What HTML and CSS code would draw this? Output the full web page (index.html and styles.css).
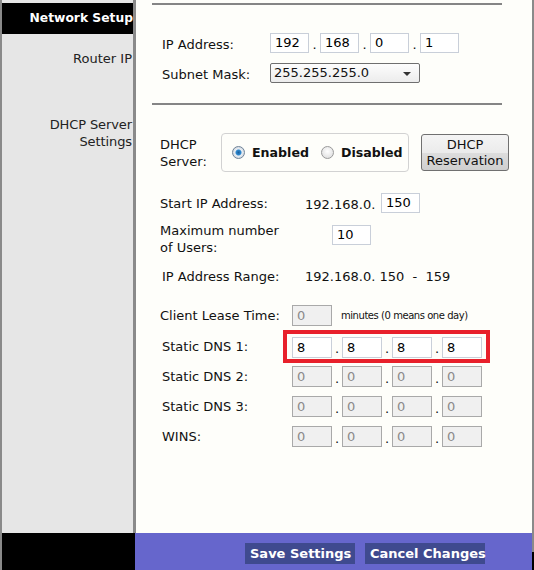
FILE: index.html
```html
<!DOCTYPE html>
<html>
<head>
<meta charset="utf-8">
<link rel="stylesheet" href="styles.css">
</head>
<body>
<div class="page">
  <div class="top">
    <div class="sidebar">
      <div class="side-head">Network Setup</div>
      <div class="side-item side-router">Router IP</div>
      <div class="side-item side-dhcp">DHCP Server<br>Settings</div>
    </div>
    <div class="main">
      <div class="hr hr1"></div>
      <div class="row row-ip">
        <span class="lbl lbl-ip">IP Address:</span>
        <div class="quad">
          <span class="inp">192</span><span class="dot">.</span>
          <span class="inp">168</span><span class="dot">.</span>
          <span class="inp">0</span><span class="dot">.</span>
          <span class="inp">1</span>
        </div>
      </div>
      <div class="row row-mask">
        <span class="lbl lbl-ip">Subnet Mask:</span>
        <div class="select"><span>255.255.255.0</span><span class="arrow"></span></div>
      </div>
      <div class="hr hr2"></div>
      <div class="row row-dhcp">
        <span class="lbl lbl-dhcp">DHCP<br>Server:</span>
        <div class="radios">
          <span class="radio on"></span><b class="rlabel">Enabled</b>
          <span class="radio"></span><b class="rlabel">Disabled</b>
        </div>
        <div class="btn-res">DHCP<br>Reservation</div>
      </div>
      <div class="row row-start">
        <span class="lbl lbl-start">Start IP Address:</span>
        <span class="val">192.168.0.</span>
        <span class="inp inp-start">150</span>
      </div>
      <div class="row row-max">
        <span class="lbl lbl-max">Maximum number<br>of Users:</span>
        <span class="inp inp-max">10</span>
      </div>
      <div class="row row-range">
        <span class="lbl lbl-range">IP Address Range:</span>
        <span class="val">192.168.0. 150&nbsp; - &nbsp;159</span>
      </div>
      <div class="row row-lease">
        <span class="lbl lbl-lease">Client Lease Time:</span>
        <span class="inp dis">0</span>
        <span class="note">minutes (0 means one day)</span>
      </div>
      <div class="row row-dns1">
        <span class="lbl lbl-dns1">Static DNS 1:</span>
        <div class="redbox">
          <div class="quad">
            <span class="inp">8</span><span class="dot">.</span>
            <span class="inp">8</span><span class="dot">.</span>
            <span class="inp">8</span><span class="dot">.</span>
            <span class="inp">8</span>
          </div>
        </div>
      </div>
      <div class="row row-dns2">
        <span class="lbl lbl-dns">Static DNS 2:</span>
        <div class="quad">
          <span class="inp dis">0</span><span class="dot">.</span>
          <span class="inp dis">0</span><span class="dot">.</span>
          <span class="inp dis">0</span><span class="dot">.</span>
          <span class="inp dis">0</span>
        </div>
      </div>
      <div class="row row-dns3">
        <span class="lbl lbl-dns">Static DNS 3:</span>
        <div class="quad">
          <span class="inp dis">0</span><span class="dot">.</span>
          <span class="inp dis">0</span><span class="dot">.</span>
          <span class="inp dis">0</span><span class="dot">.</span>
          <span class="inp dis">0</span>
        </div>
      </div>
      <div class="row row-wins">
        <span class="lbl lbl-dns">WINS:</span>
        <div class="quad">
          <span class="inp dis">0</span><span class="dot">.</span>
          <span class="inp dis">0</span><span class="dot">.</span>
          <span class="inp dis">0</span><span class="dot">.</span>
          <span class="inp dis">0</span>
        </div>
      </div>
    </div>
  </div>
  <div class="footer">
    <div class="foot-black"></div>
    <div class="foot-bar">
      <span class="fbtn fbtn-save">Save Settings</span>
      <span class="fbtn fbtn-cancel">Cancel Changes</span>
    </div>
    <div class="foot-edge"></div>
  </div>
</div>
</body>
</html>
```

FILE: styles.css
```css
html, body {
  margin: 0;
  padding: 0;
  background: #fefefa;
}
.page {
  width: 534px;
  height: 570px;
  display: flex;
  flex-direction: column;
  font-family: "DejaVu Sans", Verdana, sans-serif;
  font-size: 13px;
  color: #111;
  box-sizing: border-box;
  border-left: 2px solid #8a8a8a;
  overflow: hidden;
}
.top {
  display: flex;
  height: 533px;
}
.sidebar {
  width: 131px;
  background: #e6e6e6;
  border-right: 3px solid #8a8a8a;
  padding-top: 3px;
  text-align: right;
}
.side-head {
  height: 31px;
  line-height: 31px;
  background: #000;
  color: #fff;
  font-weight: bold;
  font-size: 12.3px;
  white-space: nowrap;
}
.side-item {
  color: #222;
  line-height: 17px;
  padding-right: 1px;
}
.side-router { margin-top: 16px; }
.side-dhcp { margin-top: 49px; letter-spacing: -0.1px; }
.main {
  width: 396px;
  border-right: 2px solid #8a8a8a;
  background: #fefefa;
}
.hr {
  height: 2px;
  width: 350px;
  margin-left: 16px;
  background: #858585;
}
.hr1 { margin-top: 3px; }
.hr2 { margin-top: 20px; }
.row {
  display: flex;
  align-items: center;
}
.lbl {
  flex: none;
  line-height: 17px;
  white-space: nowrap;
}
.row-ip { margin-top: 28px; height: 20px; }
.row-mask { margin-top: 10px; height: 20px; }
.lbl-ip { width: 108px; padding-left: 26px; padding-top: 3px; }
.quad { display: flex; align-items: center; }
.inp {
  box-sizing: border-box;
  width: 39px;
  height: 20px;
  border: 1px solid #c9cfd9;
  background: #fff;
  padding-left: 4px;
  line-height: 18px;
  color: #000;
  flex: none;
}
.row-dns1 .inp, .row-dns2 .inp, .row-dns3 .inp, .row-wins .inp, .row-lease .inp {
  width: 40px;
  height: 21px;
  line-height: 19px;
}
.dot {
  width: 11px;
  text-align: center;
  line-height: 18px;
  padding-top: 4px;
}
.row-dns1 .dot, .row-dns2 .dot, .row-dns3 .dot, .row-wins .dot { width: 10px; }
.inp.dis {
  background: #f0f0f0;
  border-color: #a9a9a9;
  color: #8a8a8a;
}
.select {
  box-sizing: border-box;
  width: 150px;
  height: 20px;
  border: 1px solid #6f6f6f;
  border-radius: 2px;
  background: linear-gradient(#fdfdfd, #ececec);
  display: flex;
  align-items: center;
  justify-content: space-between;
  padding: 0 8px 0 3px;
  line-height: 18px;
}
.arrow {
  width: 0;
  height: 0;
  border-left: 4px solid transparent;
  border-right: 4px solid transparent;
  border-top: 4px solid #333;
  margin-top: 2px;
}
.row-dhcp { margin-top: 28px; height: 39px; }
.lbl-dhcp { width: 61px; padding-left: 24px; line-height: 17px; }
.radios {
  box-sizing: border-box;
  width: 188px;
  height: 39px;
  border: 1px solid #d2d2d2;
  border-radius: 4px;
  display: flex;
  align-items: center;
  padding-left: 10px;
}
.radio {
  box-sizing: border-box;
  width: 13px;
  height: 13px;
  border-radius: 50%;
  border: 1px solid #9a9a9a;
  background: radial-gradient(circle at 50% 40%, #fff, #d8d8d8);
  flex: none;
}
.radio.on {
  background: radial-gradient(circle, #1a5f9e 0, #2f8ad0 2.5px, #e9eef4 3.5px, #cfd6de 6px);
  border-color: #6f8398;
}
.rlabel {
  margin-left: 7px;
  margin-right: 12px;
  font-size: 12.6px;
}
.btn-res {
  box-sizing: border-box;
  margin-left: 12px;
  width: 88px;
  height: 37px;
  border: 1px solid #707070;
  border-radius: 3px;
  background: linear-gradient(#f4f4f4 0, #ebebeb 50%, #dddddd 51%, #cfcfcf 100%);
  text-align: center;
  line-height: 16px;
  padding-top: 2px;
  color: #111;
}
.row-start { margin-top: 21px; height: 20px; }
.lbl-start { width: 145px; padding-left: 24px; }
.val { white-space: nowrap; padding-top: 3px; }
.row-start .val { width: 76px; }
.row-max { margin-top: 9px; height: 32px; align-items: flex-start; }
.lbl-max { width: 172px; padding-left: 24px; line-height: 17px; }
.inp-max { margin-top: 3px; }
.row-range { margin-top: 14px; height: 16px; }
.lbl-range { width: 143px; padding-left: 26px; }
.row-range .val { padding-top: 0; }
.row-lease { margin-top: 21px; height: 21px; }
.lbl-lease { width: 132px; padding-left: 24px; }
.note { font-size: 10px; letter-spacing: -0.45px; margin-left: 9px; color: #111; }
.row-dns1 { margin-top: 4px; height: 33px; }
.lbl-dns1 { width: 121px; padding-left: 26px; }
.redbox {
  box-sizing: border-box;
  height: 33px;
  width: 207px;
  border: 4px solid #e8202b;
  padding: 2px 0 0 5px;
}
.lbl-dns { width: 130px; padding-left: 26px; }
.row-dns2 { margin-top: 3px; height: 21px; }
.row-dns3 { margin-top: 9px; height: 21px; }
.row-wins { margin-top: 9px; height: 21px; }
.footer {
  display: flex;
  height: 37px;
}
.foot-black {
  width: 133px;
  background: #000;
}
.foot-bar {
  flex: 1;
  background: #6666cc;
  display: flex;
  padding: 10px 0 0 110px;
  gap: 10px;
}
.foot-edge {
  width: 2px;
  background: linear-gradient(#8a8a8a 19px, #000 19px);
}
.fbtn {
  height: 21px;
  line-height: 21px;
  background: #3f4a8f;
  color: #fff;
  font-weight: bold;
  padding: 0 5px;
  white-space: nowrap;
}
.fbtn-save { width: 100px; }
.fbtn-cancel { width: 110px; }
```
